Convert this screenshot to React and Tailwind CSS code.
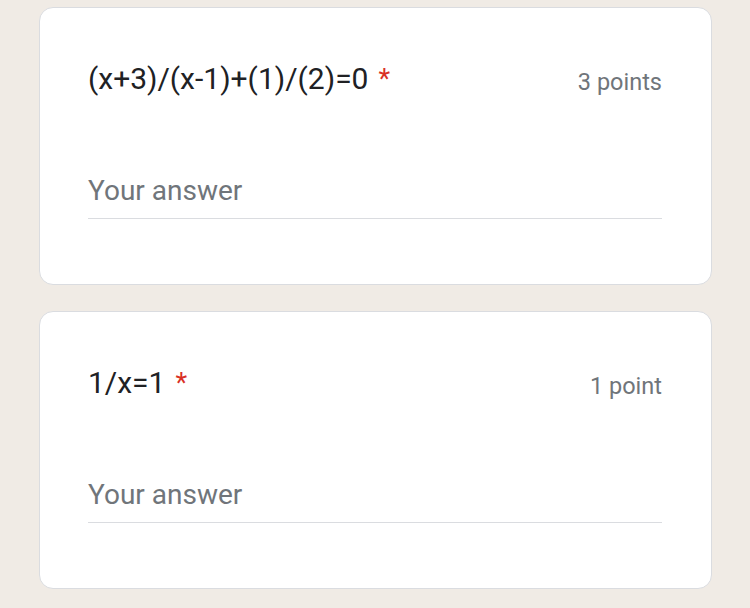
export default function App() {
  const items = [
    { q: "(x+3)/(x-1)+(1)/(2)=0", pts: "3 points" },
    { q: "1/x=1", pts: "1 point" },
  ];
  return (
    <div
      className="w-[750px] h-[608px] bg-[#f0ebe5] overflow-hidden flex flex-col gap-[26px] pt-[7px] pl-[39px] pr-[38px]"
      style={{ fontFamily: "Roboto, 'Liberation Sans', sans-serif" }}
    >
      {items.map((it, i) => (
        <div
          key={i}
          className="shrink-0 h-[278px] bg-white border-[1.5px] border-[#dadce0] rounded-[14px] pl-[48px] pr-[49px] pt-[53px]"
        >
          <div className="flex items-start justify-between">
            <div className="text-[30px] leading-[36px] text-[#202124] flex items-start">
              <span>{it.q}</span>
              <span className="text-[#d93025] text-[27px] ml-[10px] leading-[36px]">*</span>
            </div>
            <div className="text-[23.5px] leading-[36px] text-[#70757a] pt-[3px]">
              {it.pts}
            </div>
          </div>
          <div className="mt-[73px] border-b-[1.5px] border-[#dadce0] pb-[9px] text-[28px] leading-[36px] text-[#70757a]">
            Your answer
          </div>
        </div>
      ))}
    </div>
  );
}
